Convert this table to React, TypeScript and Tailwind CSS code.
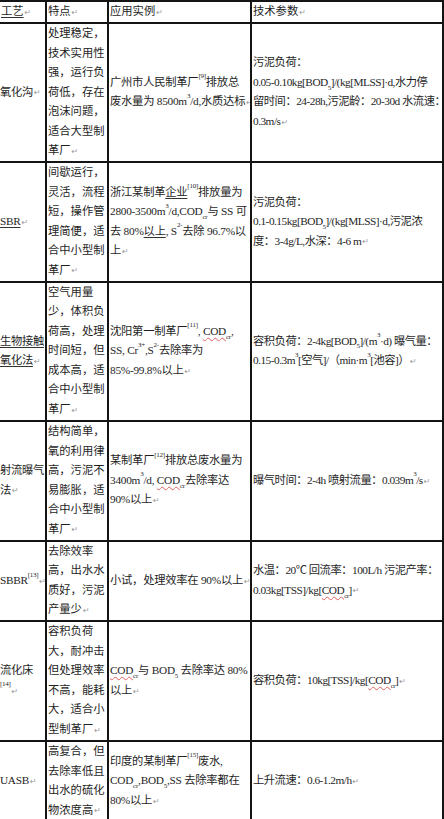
import type { ReactNode } from 'react';

const Ret = () => (
  <span className="text-[8px] text-[#9a9a9a] ml-[1px] align-middle [font-family:'DejaVu_Sans',sans-serif]">↵</span>
);
const Sub = ({ children }: { children: ReactNode }) => (
  <sub className="text-[7px] leading-none align-[-2px]">{children}</sub>
);
const Sup = ({ children }: { children: ReactNode }) => (
  <sup className="text-[7px] leading-none align-[4px]">{children}</sup>
);
const Wavy = ({ children }: { children: ReactNode }) => (
  <span className="underline decoration-wavy decoration-[#e06060] decoration-[1px] underline-offset-2">{children}</span>
);
const U = ({ children }: { children: ReactNode }) => (
  <span className="underline decoration-[#333] underline-offset-2">{children}</span>
);
const COD = () => (
  <Wavy>
    COD<Sub>cr</Sub>
  </Wavy>
);

type Row = {
  name: ReactNode[];
  feat: string[];
  app: ReactNode[];
  param: ReactNode[];
};

const rows: Row[] = [
  {
    name: ['氧化沟'],
    feat: ['处理稳定，', '技术实用性', '强，运行负', '荷低，存在', '泡沫问题，', '适合大型制', '革厂'],
    app: [
      <>广州市人民制革厂<Sup>[9]</Sup>排放总</>,
      <>废水量为 8500m<Sup>3</Sup>/d,水质达标</>,
    ],
    param: [
      <>污泥负荷：</>,
      <>0.05-0.10kg[BOD<Sub>5</Sub>]/(kg[MLSS]·d,水力停</>,
      <>留时间：24-28h,污泥龄：20-30d 水流速：</>,
      <>0.3m/s</>,
    ],
  },
  {
    name: [<U>SBR</U>],
    feat: ['间歇运行，', '灵活，流程', '短，操作管', '理简便，适', '合中小型制', '革厂'],
    app: [
      <>浙江某制革<U>企业</U><Sup>[10]</Sup>排放量为</>,
      <>2800-3500m<Sup>3</Sup>/d,COD<Sub>cr</Sub>与 SS 可</>,
      <>去 80%<U>以上</U>, S<Sup>2-</Sup>去除 96.7%以</>,
      <>上</>,
    ],
    param: [
      <>污泥负荷：</>,
      <>0.1-0.15kg[BOD<Sub>5</Sub>]/(kg[MLSS]·d,污泥浓</>,
      <>度：3-4g/L,水深：4-6 m</>,
    ],
  },
  {
    name: [<U>生物接触</U>, <U>氧化法</U>],
    feat: ['空气用量', '少，体积负', '荷高，处理', '时间短，但', '成本高，适', '合中小型制', '革厂'],
    app: [
      <>沈阳第一制革厂<Sup>[11]</Sup>, <COD />,</>,
      <>SS, Cr<Sup>3+</Sup>,S<Sup>2-</Sup>去除率为</>,
      <>85%-99.8%以上</>,
    ],
    param: [
      <>容积负荷：2-4kg[BOD<Sub>5</Sub>]/(m<Sup>3</Sup>·d) 曝气量：</>,
      <>0.15-0.3m<Sup>3</Sup>[空气]/（min·m<Sup>3</Sup>[池容]）</>,
    ],
  },
  {
    name: ['射流曝气', '法'],
    feat: ['结构简单，', '氧的利用律', '高，污泥不', '易膨胀，适', '合中小型制', '革厂'],
    app: [
      <>某制革厂<Sup>[12]</Sup>排放总废水量为</>,
      <>3400m<Sup>3</Sup>/d, <COD />去除率达</>,
      <>90%以上</>,
    ],
    param: [<>曝气时间：2-4h 喷射流量：0.039m<Sup>3</Sup>/s</>],
  },
  {
    name: [<>SBBR<Sup>[13]</Sup></>],
    feat: ['去除效率', '高，出水水', '质好，污泥', '产量少'],
    app: [<>小试，处理效率在 90%以上</>],
    param: [
      <>水温：20℃ 回流率：100L/h 污泥产率：</>,
      <>0.03kg[TSS]/kg[<COD />]</>,
    ],
  },
  {
    name: ['流化床', <Sup>[14]</Sup>],
    feat: ['容积负荷', '大，耐冲击', '但处理效率', '不高，能耗', '大，适合小', '型制革厂'],
    app: [
      <><COD />与 BOD<Sub>5</Sub> 去除率达 80%</>,
      <>以上</>,
    ],
    param: [<>容积负荷：10kg[TSS]/kg[<COD />]</>],
  },
  {
    name: ['UASB'],
    feat: ['高复合，但', '去除率低且', '出水的硫化', '物浓度高'],
    app: [
      <>印度的某制革厂<Sup>[15]</Sup>废水,</>,
      <>COD<Sub>cr</Sub>,BOD<Sub>5</Sub>,SS 去除率都在</>,
      <>80%以上</>,
    ],
    param: [<>上升流速：0.6-1.2m/h</>],
  },
];

const Lines = ({ lines }: { lines: ReactNode[] }) => (
  <div>
    {lines.map((l, i) => (
      <div key={i} className="whitespace-nowrap">
        {l}
        {i === lines.length - 1 && <Ret />}
      </div>
    ))}
  </div>
);

export default function App() {
  return (
    <div className="w-[444px] h-[819px] bg-white overflow-hidden text-[11.3px] leading-[19.5px] text-[#1e1e1e] [font-family:'Liberation_Serif','Noto_Sans_CJK_SC',serif]">
      <div className="border-t-2 border-[#141414]">
        {/* header */}
        <div className="flex border-b-2 border-[#141414]">
          <div className="w-[47px] border-r-2 border-[#141414] px-[1px]">
            <U>工艺</U>
            <Ret />
          </div>
          <div className="w-[62px] border-r-2 border-[#141414] px-[1px]">
            特点
            <Ret />
          </div>
          <div className="w-[143px] border-r-2 border-[#141414] px-[1px]">
            应用实例
            <Ret />
          </div>
          <div className="flex-1 border-r-2 border-[#141414] px-[1px]">
            技术参数
            <Ret />
          </div>
        </div>

        {rows.map((r, i) => (
          <div key={i} className="flex border-b-2 border-[#141414]">
            <div className="w-[47px] border-r-2 border-[#141414] flex items-center overflow-hidden tracking-[-0.3px]">
              <Lines lines={r.name} />
            </div>
            <div className="w-[62px] border-r-2 border-[#141414] pl-[1px] overflow-hidden">
              <Lines lines={r.feat} />
            </div>
            <div className="w-[143px] border-r-2 border-[#141414] pl-[1px] flex items-center overflow-hidden tracking-[-0.25px]">
              <Lines lines={r.app} />
            </div>
            <div className="flex-1 border-r-2 border-[#141414] pl-[1px] flex items-center overflow-hidden tracking-[-0.5px]">
              <Lines lines={r.param} />
            </div>
          </div>
        ))}
      </div>
    </div>
  );
}
